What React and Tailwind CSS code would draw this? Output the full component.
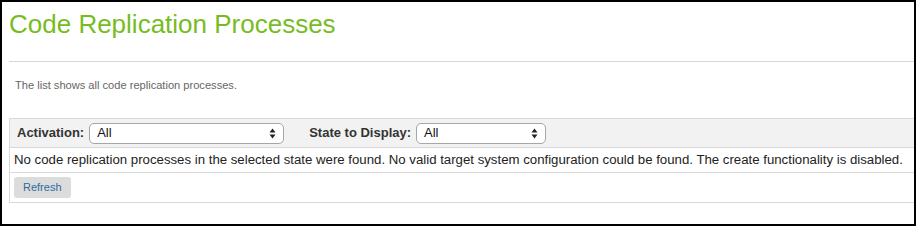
import React from "react";

function Arrows() {
  return (
    <svg width="7" height="11" viewBox="0 0 7 11" className="shrink-0">
      <path d="M3.5 0.5 L6.5 4.5 L0.5 4.5 Z" fill="#222" />
      <path d="M3.5 10.5 L6.5 6.5 L0.5 6.5 Z" fill="#222" />
    </svg>
  );
}

function Select({ width }) {
  return (
    <div
      className={`flex h-[21px] items-center justify-between rounded-[5px] border border-[#a6a6a6] bg-white pl-[7px] pr-[7px] text-[13px] text-[#111] ${width}`}
    >
      <span>All</span>
      <Arrows />
    </div>
  );
}

export default function App() {
  return (
    <div className="h-[226px] w-[916px] overflow-hidden border-2 border-black bg-white font-['Liberation_Sans',Arial,sans-serif]">
      <div className="pl-[7px]">
        <h1 className="pt-[9px] text-[26px] leading-[26px] text-[#77bc1f]">
          Code Replication Processes
        </h1>
        <div className="mt-[24px] h-px bg-[#d6d6d6]" />
        <p className="mt-[15px] pl-[6px] text-[11.1px] leading-[16px] text-[#666]">
          The list shows all code replication processes.
        </p>
        <div className="mt-[25px] border border-r-0 border-[#d9d9d9]">
          <div className="flex h-[28px] items-center bg-[#f2f2f2] pl-[7px]">
            <span className="text-[13px] font-bold text-[#333]">Activation:</span>
            <div className="ml-[5px]">
              <Select width="w-[195px]" />
            </div>
            <span className="ml-[25px] text-[13px] font-bold text-[#333]">State to Display:</span>
            <div className="ml-[5px]">
              <Select width="w-[130px]" />
            </div>
          </div>
          <div className="flex h-[25px] items-center border-t border-[#d9d9d9] pl-[4px] text-[13.22px] text-[#222]">
            No code replication processes in the selected state were found. No valid target system configuration could be found. The create functionality is disabled.
          </div>
          <div className="flex h-[30px] items-center border-t border-[#d9d9d9] pl-[4px]">
            <button className="h-[21px] rounded-[3px] bg-[#dcdcdc] px-[9px] text-[11px] text-[#2d6aa0]">
              Refresh
            </button>
          </div>
        </div>
      </div>
    </div>
  );
}
